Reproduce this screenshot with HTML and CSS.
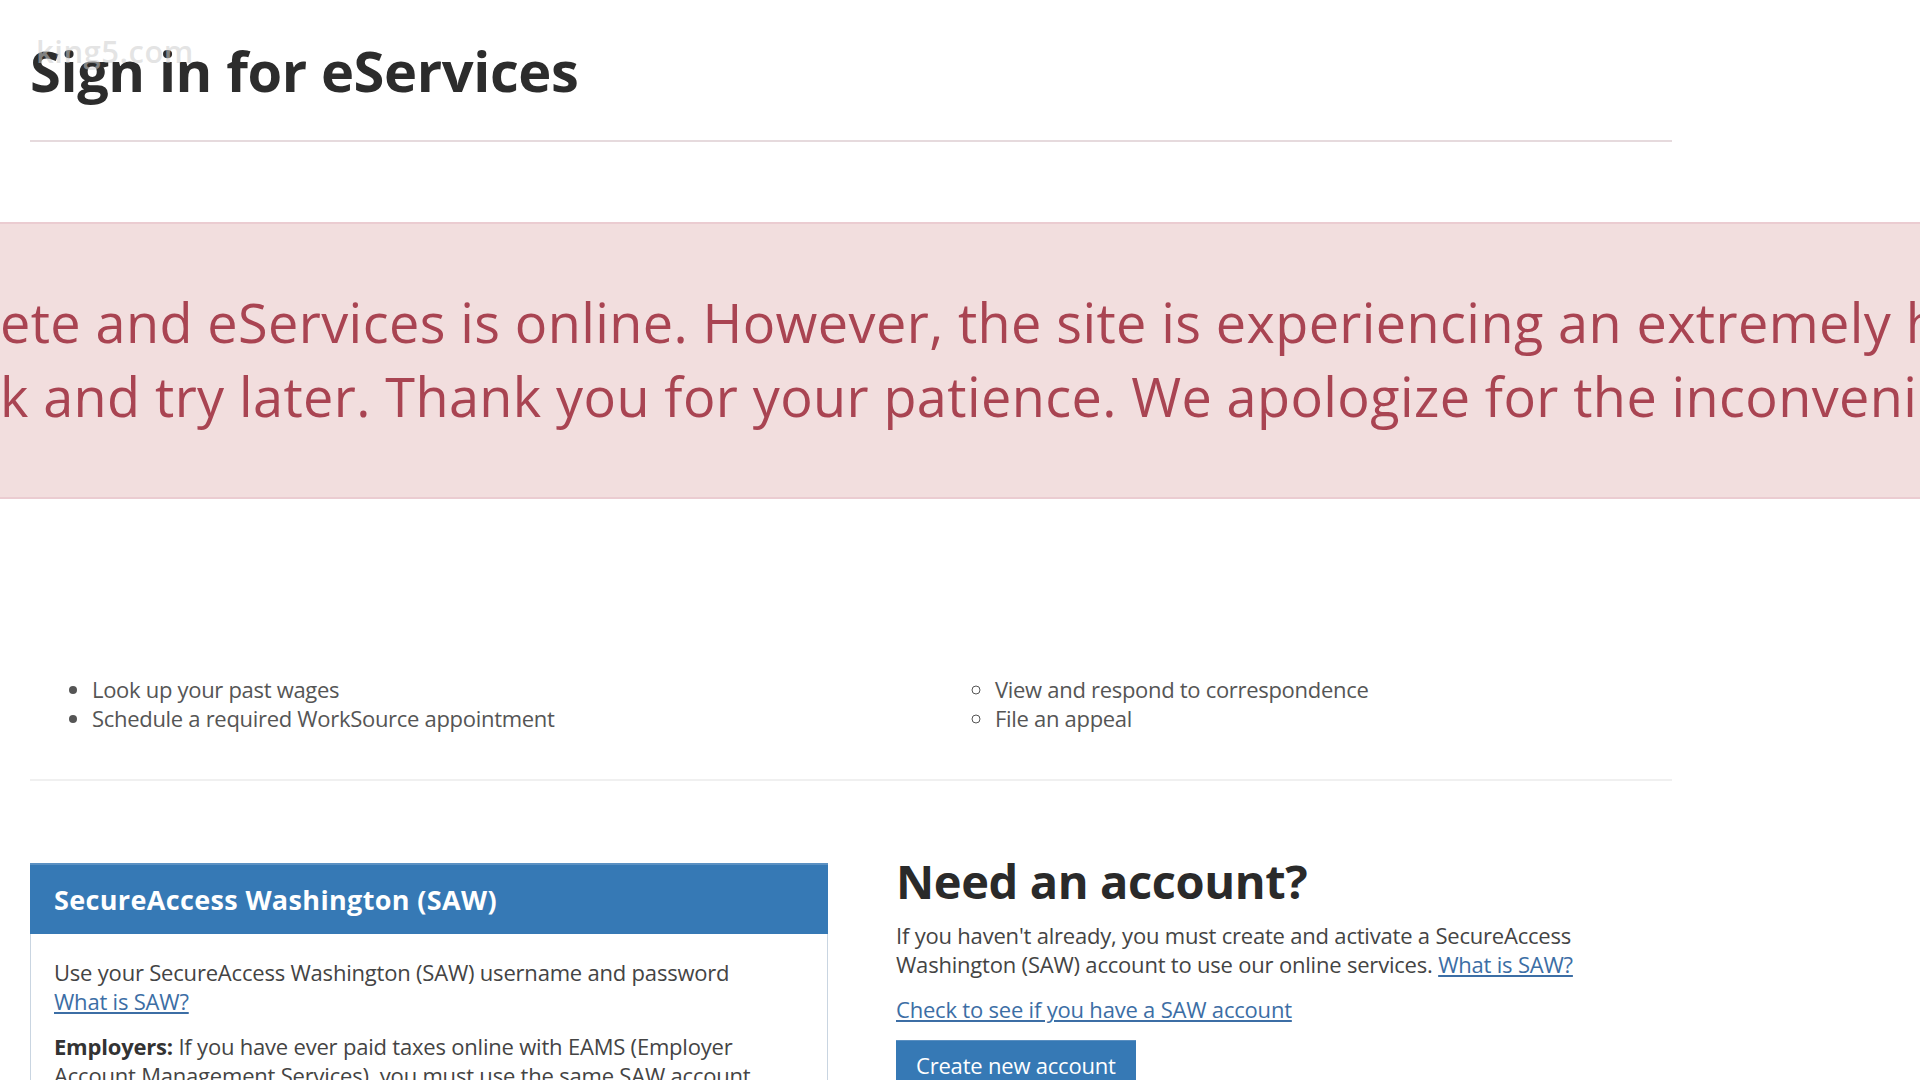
FILE: index.html
```html
<!DOCTYPE html>
<html lang="en">
<head>
<meta charset="utf-8">
<title>Sign in for eServices</title>
<link rel="stylesheet" href="styles.css">
</head>
<body>
<div class="watermark">king5.com</div>
<div class="container">
  <h1 class="page-title">Sign in for eServices</h1>
</div>

<div class="alert">
  <div class="alert-line">ete and eServices is online. However, the site is experiencing an extremely high volume of traffic.</div>
  <div class="alert-line">k and try later. Thank you for your patience. We apologize for the inconvenience.</div>
</div>

<div class="container">
  <div class="lists">
    <ul class="list list-disc">
      <li>Look up your past wages</li>
      <li>Schedule a required WorkSource appointment</li>
    </ul>
    <ul class="list list-circle">
      <li>View and respond to correspondence</li>
      <li>File an appeal</li>
    </ul>
  </div>

  <div class="signin-row">
    <div class="panel">
      <div class="panel-heading">SecureAccess Washington (SAW)</div>
      <div class="panel-body">
        <p>Use your SecureAccess Washington (SAW) username and password<br><a href="#">What is SAW?</a></p>
        <p><strong>Employers:</strong> If you have ever paid taxes online with EAMS (Employer Account Management Services), you must use the same SAW account</p>
      </div>
    </div>
    <div class="account">
      <h2 class="account-title">Need an account?</h2>
      <p>If you haven't already, you must create and activate a SecureAccess Washington (SAW) account to use our online services. <a href="#">What is SAW?</a></p>
      <p><a href="#">Check to see if you have a SAW account</a></p>
      <a class="btn" href="#">Create new account</a>
    </div>
  </div>
</div>
</body>
</html>
```

FILE: styles.css
```css
html, body {
  margin: 0;
  padding: 0;
  background: #ffffff;
}

body {
  font-family: "Open Sans", "Noto Sans", sans-serif;
  color: #444444;
  overflow: hidden;
  height: 1080px;
  position: relative;
}

.watermark {
  position: absolute;
  left: 36px;
  top: 30px;
  font-size: 31px;
  font-weight: 600;
  color: rgba(205, 205, 205, 0.55);
  letter-spacing: 0.5px;
  z-index: 2;
}

.container {
  margin-left: 30px;
  width: 1642px;
}

.page-title {
  margin: 37px 0 0;
  padding-bottom: 36px;
  font-size: 56px;
  line-height: 67px;
  font-weight: 700;
  letter-spacing: -0.4px;
  color: #2c2c2c;
  border-bottom: 2px solid #e6dadd;
}

.alert {
  margin-top: 80px;
  background: #f2dede;
  border-top: 2px solid #ebccd1;
  border-bottom: 2px solid #ebccd1;
  padding: 61px 0 64px;
  overflow: hidden;
  color: #a94452;
  font-size: 54px;
  line-height: 74px;
  letter-spacing: 0.4px;
}

.alert-line {
  white-space: nowrap;
}

.lists {
  display: grid;
  grid-template-columns: 903px 1fr;
  margin-top: 176px;
  padding-bottom: 46px;
  border-bottom: 2px solid #f0f0f0;
}

.list {
  margin: 0;
  padding-left: 62px;
  font-size: 22px;
  line-height: 29px;
  letter-spacing: -0.3px;
  color: #555555;
}

.list-disc { list-style: disc; }
.list-circle { list-style: circle; }

.signin-row {
  display: grid;
  grid-template-columns: 798px 1fr;
  column-gap: 68px;
  margin-top: 74px;
}

.panel {
  margin-top: 8px;
  border: 1px solid #c9d5e1;
  border-top: none;
}

.panel-heading {
  height: 71px;
  display: flex;
  align-items: center;
  padding: 0 24px;
  margin: 0 -1px;
  background: #3679b5;
  border-top: 2px solid #5b91c3;
  box-sizing: border-box;
  color: #ffffff;
  font-size: 27px;
  font-weight: 700;
  letter-spacing: 0.35px;
}

.panel-body {
  padding: 24px 23px;
  font-size: 22px;
  line-height: 29px;
  letter-spacing: -0.2px;
  color: #444444;
}

.panel-body p {
  margin: 0 0 16px;
}

.panel-body strong {
  color: #333333;
}

a {
  color: #3c6ea5;
  text-decoration: underline;
}

.account {
  font-size: 22px;
  line-height: 29px;
  letter-spacing: -0.2px;
  color: #444444;
}

.account-title {
  margin: 2px 0 0;
  font-size: 47px;
  line-height: 48px;
  font-weight: 700;
  letter-spacing: -0.4px;
  color: #2a2a2a;
}

.account p {
  margin: 16px 0 0;
  width: 700px;
}

.account p + p {
  margin-top: 16px;
}

.btn {
  display: inline-block;
  margin-top: 16px;
  padding: 10px 20px;
  background: #3679b5;
  color: #ffffff;
  text-decoration: none;
  border-top: 1px solid #5a8fc1;
}
```
